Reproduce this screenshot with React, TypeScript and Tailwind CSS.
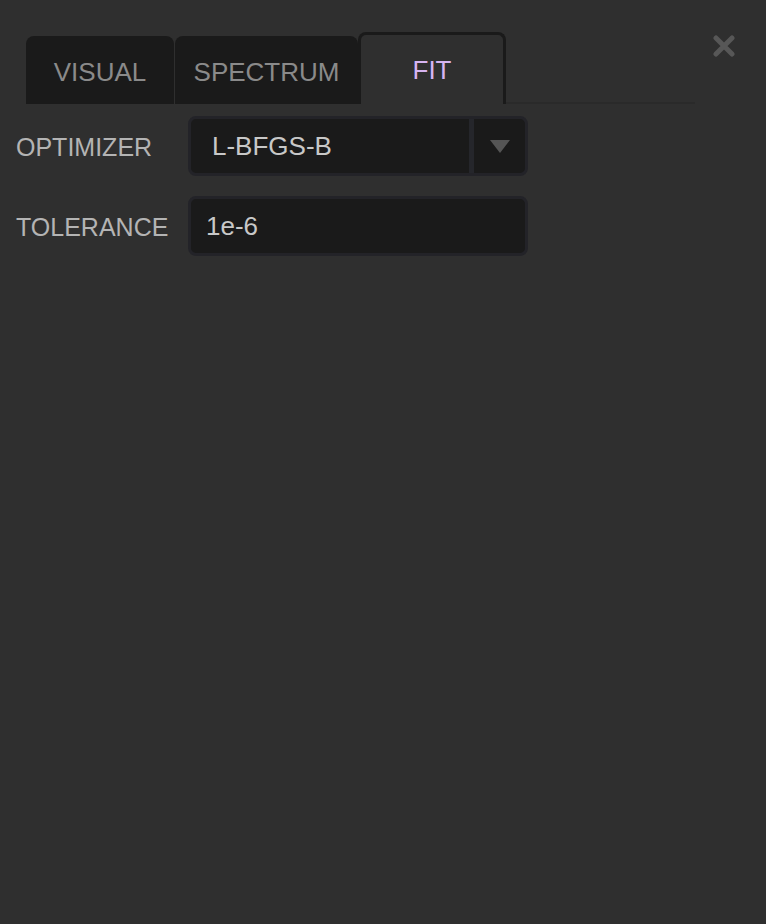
import React from "react";

export default function App() {
  const font = { fontFamily: '"Liberation Sans", Arial, sans-serif' };
  return (
    <div className="relative min-h-screen w-full bg-[#2f2f2f]" style={font}>
      <button className="absolute left-[713px] top-[35px] flex h-[22px] w-[22px] items-center justify-center">
        <svg width="22" height="22" viewBox="0 0 22 22">
          <path d="M3 3 L19 19 M19 3 L3 19" stroke="#575757" strokeWidth="5" strokeLinecap="round" />
        </svg>
      </button>

      <div className="flex items-end pl-[26px] pt-[32px]">
        <div className="flex h-[68px] w-[148px] items-center justify-center rounded-t-[8px] bg-[#1a1a1a] pt-[4px] text-[26px] text-[#8a8a8a]">
          VISUAL
        </div>
        <div className="ml-[1px] flex h-[68px] w-[183px] items-center justify-center rounded-t-[8px] bg-[#1a1a1a] pt-[4px] text-[26px] text-[#8a8a8a]">
          SPECTRUM
        </div>
        <div className="flex h-[72px] w-[148px] items-center justify-center rounded-t-[8px] border-[3px] border-b-0 border-[#1a1a1a] pt-[2px] text-[26px] text-[#d6b4f2]">
          FIT
        </div>
        <div className="h-[2px] w-[189px] rounded-r-full bg-[#2a2a2a]" />
      </div>

      <div className="mt-[12px] flex flex-col gap-[20px] pl-[16px]">
        <div className="flex items-center">
          <div className="w-[172px] pt-[3px] text-[25px] text-[#b4b4b4]">OPTIMIZER</div>
          <div className="flex h-[60px] w-[340px] items-stretch rounded-[8px] border-[3px] border-[#232328] bg-[#1a1a1a]">
            <div className="flex flex-1 items-center pl-[21px] pt-[1px] text-[26px] text-[#c8c8c8]">L-BFGS-B</div>
            <div className="w-[5px] bg-[#25262b]" />
            <div className="flex w-[51px] items-center justify-center">
              <svg width="20" height="13" viewBox="0 0 20 13">
                <path d="M0 0 L20 0 L10 13 Z" fill="#555555" />
              </svg>
            </div>
          </div>
        </div>
        <div className="flex items-center">
          <div className="w-[172px] pt-[3px] text-[25px] text-[#b4b4b4]">TOLERANCE</div>
          <div className="flex h-[60px] w-[340px] items-center rounded-[8px] border-[3px] border-[#232328] bg-[#1a1a1a] pl-[15px] text-[26px] text-[#c8c8c8]">
            1e-6
          </div>
        </div>
      </div>
    </div>
  );
}
